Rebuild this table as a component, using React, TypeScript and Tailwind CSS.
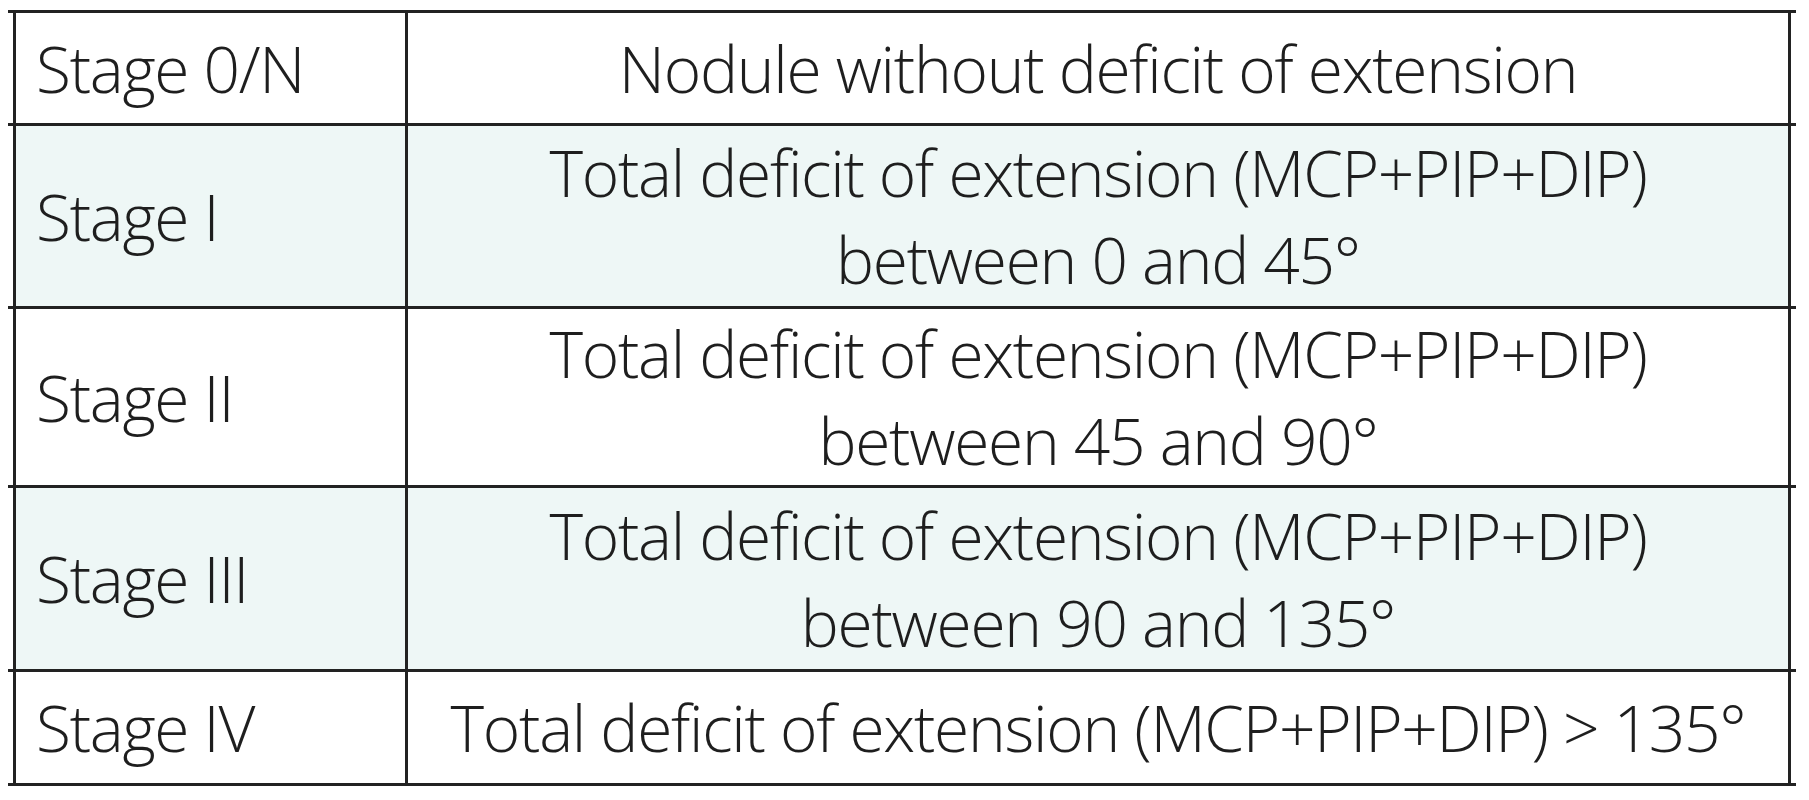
import React from "react";

const rows: { stage: string; lines: string[]; tint: boolean; h: string }[] = [
  { stage: "Stage 0/N", lines: ["Nodule without deficit of extension"], tint: false, h: "h-[110px]" },
  { stage: "Stage I", lines: ["Total deficit of extension (MCP+PIP+DIP)", "between 0 and 45°"], tint: true, h: "h-[180px]" },
  { stage: "Stage II", lines: ["Total deficit of extension (MCP+PIP+DIP)", "between 45 and 90°"], tint: false, h: "h-[176px]" },
  { stage: "Stage III", lines: ["Total deficit of extension (MCP+PIP+DIP)", "between 90 and 135°"], tint: true, h: "h-[181px]" },
  { stage: "Stage IV", lines: ["Total deficit of extension (MCP+PIP+DIP) > 135°"], tint: false, h: "h-[111px]" },
];

function HLine() {
  return <div className="h-[3px] w-full bg-[#222222]" />;
}

export default function App() {
  return (
    <div className="w-[1809px] h-[800px] bg-white overflow-hidden">
      <div
        className="ml-[8px] mt-[10px] w-[1788px] text-[#1e1e1e] font-light tracking-[-0.02em] text-[64px] leading-[87px]"
        style={{ fontFamily: '"Open Sans", "Liberation Sans", sans-serif' }}
      >
        <HLine />
        {rows.map((r, i) => (
          <React.Fragment key={i}>
            <div className={`mx-[5px] flex ${r.h} ${r.tint ? "bg-[#eef7f6]" : "bg-white"}`}>
              <div className="w-[3px] bg-[#222222]" />
              <div className="w-[389px] flex items-center pl-[20px]">
                <span>{r.stage}</span>
              </div>
              <div className="w-[3px] bg-[#222222]" />
              <div className="flex-1 flex flex-col items-center justify-center text-center">
                {r.lines.map((l, j) => (
                  <div key={j}>{l}</div>
                ))}
              </div>
              <div className="w-[3px] bg-[#222222]" />
            </div>
            <HLine />
          </React.Fragment>
        ))}
      </div>
    </div>
  );
}
